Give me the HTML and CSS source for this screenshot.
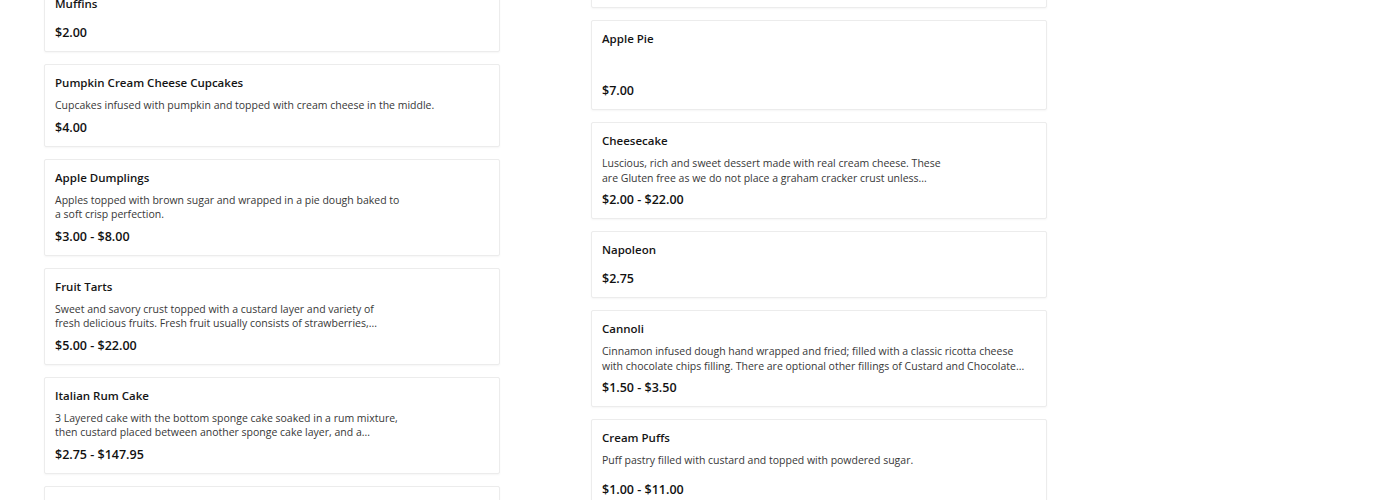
FILE: index.html
```html
<!DOCTYPE html>
<html lang="en">
<head>
<meta charset="utf-8">
<title>Desserts</title>
<link rel="stylesheet" href="styles.css">
</head>
<body>
<main class="menu">
  <section class="column column-left">
    <article class="card">
      <h3 class="title">Muffins</h3>
      <p class="price">$2.00</p>
    </article>
    <article class="card">
      <h3 class="title">Pumpkin Cream Cheese Cupcakes</h3>
      <p class="desc">Cupcakes infused with pumpkin and topped with cream cheese in the middle.</p>
      <p class="price">$4.00</p>
    </article>
    <article class="card">
      <h3 class="title">Apple Dumplings</h3>
      <p class="desc">Apples topped with brown sugar and wrapped in a pie dough baked to<br>a soft crisp perfection.</p>
      <p class="price">$3.00 - $8.00</p>
    </article>
    <article class="card">
      <h3 class="title">Fruit Tarts</h3>
      <p class="desc">Sweet and savory crust topped with a custard layer and variety of<br>fresh delicious fruits. Fresh fruit usually consists of strawberries,...</p>
      <p class="price">$5.00 - $22.00</p>
    </article>
    <article class="card">
      <h3 class="title">Italian Rum Cake</h3>
      <p class="desc">3 Layered cake with the bottom sponge cake soaked in a rum mixture,<br>then custard placed between another sponge cake layer, and a...</p>
      <p class="price">$2.75 - $147.95</p>
    </article>
    <article class="card card-cut"></article>
  </section>
  <section class="column column-right">
    <article class="card card-cut"></article>
    <article class="card">
      <h3 class="title">Apple Pie</h3>
      <p class="desc desc-blank"></p>
      <p class="price">$7.00</p>
    </article>
    <article class="card">
      <h3 class="title">Cheesecake</h3>
      <p class="desc">Luscious, rich and sweet dessert made with real cream cheese. These<br>are Gluten free as we do not place a graham cracker crust unless...</p>
      <p class="price">$2.00 - $22.00</p>
    </article>
    <article class="card">
      <h3 class="title">Napoleon</h3>
      <p class="price">$2.75</p>
    </article>
    <article class="card">
      <h3 class="title">Cannoli</h3>
      <p class="desc">Cinnamon infused dough hand wrapped and fried; filled with a classic ricotta cheese<br>with chocolate chips filling. There are optional other fillings of Custard and Chocolate...</p>
      <p class="price">$1.50 - $3.50</p>
    </article>
    <article class="card">
      <h3 class="title">Cream Puffs</h3>
      <p class="desc desc-extra">Puff pastry filled with custard and topped with powdered sugar.</p>
      <p class="price">$1.00 - $11.00</p>
    </article>
  </section>
</main>
</body>
</html>
```
FILE: styles.css
```css
* { box-sizing: border-box; }
html, body { margin: 0; padding: 0; background: #fff; }
body {
  font-family: "Open Sans", "Liberation Sans", sans-serif;
  color: #111;
  overflow: hidden;
  height: 500px;
}
.menu {
  display: grid;
  grid-template-columns: 456px 456px;
  column-gap: 91px;
  padding-left: 44px;
  align-items: start;
}
.column {
  display: flex;
  flex-direction: column;
  gap: 12px;
}
.column-left { margin-top: -15px; }
.column-right { margin-top: -32px; }
.card {
  display: flex;
  flex-direction: column;
  border: 1px solid #ececec;
  border-radius: 2px;
  box-shadow: 0 1px 2px rgba(0,0,0,0.04);
  padding: 12px 11px 10px 10px;
  background: #fff;
}
.card-cut { height: 40px; }
.title {
  margin: -1px 0 8px;
  font-size: 11.5px;
  line-height: 14px;
  font-weight: 600;
  color: #151515;
}
.title + .price { margin-top: 5px; }
.desc {
  margin: 0;
  font-size: 10.5px;
  line-height: 14.5px;
  color: #383838;
  white-space: nowrap;
}
.desc-blank { height: 22px; }
.desc-extra { padding-bottom: 7px; }
.price {
  margin: 6px 0 0;
  font-size: 12.5px;
  line-height: 17px;
  font-weight: 600;
  color: #111;
}
```
